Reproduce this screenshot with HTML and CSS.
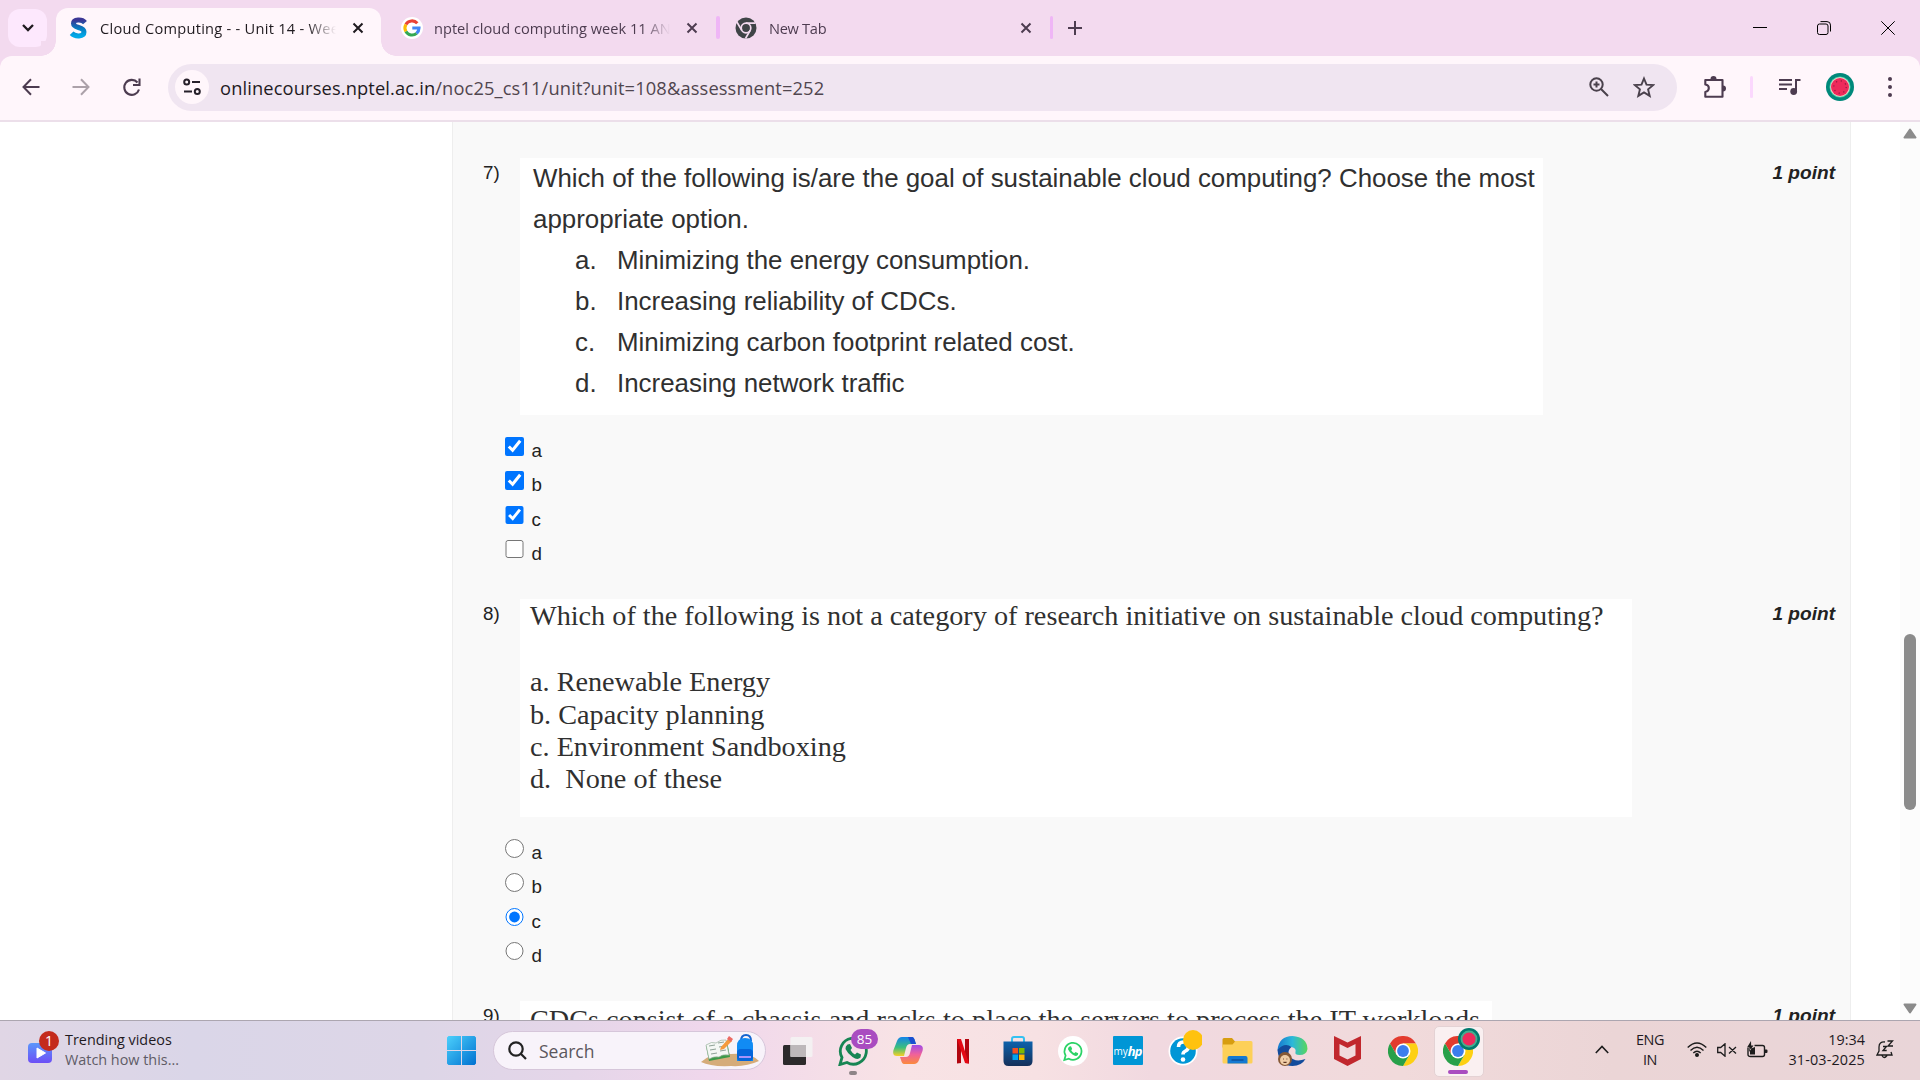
FILE: index.html
```html
<!DOCTYPE html>
<html lang="en">
<head>
<meta charset="utf-8">
<title>Cloud Computing - - Unit 14 - Week 11</title>
<link rel="stylesheet" href="styles.css">
</head>
<body>
<header class="tabstrip">
  <div class="tab-search"><svg width="12" height="8" viewBox="0 0 12 8"><path d="M1 1l5 5 5-5" fill="none" stroke="#1f1a1f" stroke-width="2.3"/></svg></div>
  <div class="tab tab-active">
    <svg class="fav" width="22" height="22" viewBox="0 0 22 22"><defs><linearGradient id="s" x1="0" y1="0" x2="0" y2="1"><stop offset="0" stop-color="#3b3695"/><stop offset=".5" stop-color="#0878bd"/><stop offset="1" stop-color="#02a9e8"/></linearGradient></defs><path d="M17 5.600C14 2 5.500 2.200 5.500 6.500C5.500 11.500 16 9.500 16 15C16 20 7 20 3.600 16.300" fill="none" stroke="url(#s)" stroke-width="5"/></svg>
    <span class="tab-title t1">Cloud Computing - - Unit 14 - Week</span>
    <svg class="x" width="12" height="12" viewBox="0 0 12 12"><path d="M1.500 1.500l9 9M10.500 1.500l-9 9" stroke="#1f1a1f" stroke-width="2"/></svg>
  </div>
  <div class="tab tab-google">
    <svg class="fav" width="22" height="22" viewBox="0 0 22 22"><circle cx="11" cy="11" r="11" fill="#fff"/><g fill="none" stroke-width="3.100"><path d="M16.300 6.300A7 7 0 0 0 4.900 7.500" stroke="#ea4335"/><path d="M4.900 7.500A7 7 0 0 0 4.900 14.500" stroke="#fbbc05"/><path d="M4.900 14.500A7 7 0 0 0 15.600 16.300" stroke="#34a853"/><path d="M15.600 16.300A7 7 0 0 0 18 11H11.300" stroke="#4285f4"/></g></svg>
    <span class="tab-title t2">nptel cloud computing week 11 ANS</span>
    <svg class="x" width="12" height="12" viewBox="0 0 12 12"><path d="M1.500 1.500l9 9M10.500 1.500l-9 9" stroke="#4d3c50" stroke-width="2"/></svg>
  </div>
  <i class="tab-sep"></i>
  <div class="tab tab-new">
    <svg class="fav" width="22" height="22" viewBox="0 0 22 22"><circle cx="11" cy="11" r="10.500" fill="#3f4447"/><circle cx="11" cy="11" r="4.800" fill="none" stroke="#f3daef" stroke-width="1.700"/><path d="M11 6.200h9.500M6.800 13.400L2 5.200M15.200 13.400L10.500 21.500" stroke="#f3daef" stroke-width="1.700"/></svg>
    <span class="tab-title t3">New Tab</span>
    <svg class="x" width="12" height="12" viewBox="0 0 12 12"><path d="M1.500 1.500l9 9M10.500 1.500l-9 9" stroke="#4d3c50" stroke-width="2"/></svg>
  </div>
  <i class="tab-sep thin"></i>
  <svg class="plus" width="14" height="14" viewBox="0 0 14 14"><path d="M7 0v14M0 7h14" stroke="#4d3c50" stroke-width="2"/></svg>
  <div class="win">
    <svg width="14" height="14" viewBox="0 0 14 14"><path d="M0 6.500h14" stroke="#000"/></svg>
    <svg width="14" height="14" viewBox="0 0 14 14" fill="none" stroke="#000"><rect x=".5" y="3" width="10.500" height="10.500" rx="2"/><path d="M3.500.6H10a3.500 3.500 0 0 1 3.500 3.500V10.500"/></svg>
    <svg width="14" height="14" viewBox="0 0 14 14"><path d="M.3.3l13.400 13.400M13.700.3L.3 13.700" stroke="#000"/></svg>
  </div>
</header>
<div class="toolbar">
  <svg class="back" width="18" height="18" viewBox="0 0 18 18"><path d="M17.500 9H2M9 1.300L1.500 9L9 16.700" fill="none" stroke="#4d3c50" stroke-width="2"/></svg>
  <svg class="fwd" width="18" height="18" viewBox="0 0 18 18"><path d="M.5 9H16M9 1.300L16.500 9L9 16.700" fill="none" stroke="#aca1a9" stroke-width="2"/></svg>
  <svg class="reload" width="19" height="19" viewBox="0 0 19 19"><path d="M17 11.500A7.500 7.500 0 1 1 15.500 4.500M17.500 .5V7H11" fill="none" stroke="#4d3c50" stroke-width="2.100"/></svg>
  <div class="omnibox">
    <div class="site"><svg width="18" height="18" viewBox="0 0 18 18" fill="none" stroke="#26202a" stroke-width="2"><circle cx="3.700" cy="4" r="2.500"/><path d="M9 4h8M1 13.500h8"/><circle cx="14.300" cy="13.500" r="2.500"/></svg></div>
    <span class="url"><b>onlinecourses.nptel.ac.in</b>/noc25_cs11/unit?unit=108&amp;assessment=252</span>
    <svg class="zoom" width="20" height="20" viewBox="0 0 20 20" fill="none" stroke="#4a414c" stroke-width="2"><circle cx="7.500" cy="7.500" r="6.200"/><path d="M12 12l7 7M7.500 4.500v6M4.500 7.500h6"/></svg>
    <svg class="star" width="22" height="22" viewBox="0 0 22 22"><path d="M11 2.500l2.500 6.100 6.600.5-5 4.300 1.600 6.500L11 16.400l-5.700 3.500 1.600-6.500-5-4.300 6.600-.5z" fill="none" stroke="#4a414c" stroke-width="1.900"/></svg>
  </div>
  <svg class="ext" width="24" height="24" viewBox="0 0 24 24"><path d="M2.300 5H19.500V21.700H2.300V17C7 16 7 10 2.300 9.500z" fill="none" stroke="#4d3c50" stroke-width="2.100" stroke-linejoin="round"/><path d="M7.500 4a3 3 0 0 1 6 0zM20 10.500a3 3 0 0 1 0 6z" fill="#4d3c50"/></svg>
  <i class="tool-sep"></i>
  <svg class="music" width="22" height="18" viewBox="0 0 22 18"><path d="M0 2h13M0 6.500h13M0 11h8M17 14V2h4.500" fill="none" stroke="#4d3c50" stroke-width="2"/><circle cx="14.700" cy="13.500" r="3.400" fill="#4d3c50"/></svg>
  <svg class="avatar" width="28" height="28" viewBox="0 0 28 28"><circle cx="14" cy="14" r="14" fill="#00897b"/><circle cx="14" cy="14" r="10.500" fill="#4fd0a5"/><circle cx="14" cy="14" r="9.700" fill="#f9d6d0"/><circle cx="14" cy="14" r="9" fill="#ee2b5b"/><circle cx="14" cy="14" r="6.200" fill="none" stroke="#8f1c40" stroke-width="1.200" stroke-dasharray="1.200 3.670"/></svg>
  <svg class="dots" width="4" height="20" viewBox="0 0 4 20" fill="#4d3c50"><circle cx="2" cy="2" r="2"/><circle cx="2" cy="10" r="2"/><circle cx="2" cy="18" r="2"/></svg>
</div>
<main class="page">
  <section class="paper">
    <article class="question">
      <div class="head"><span class="num">7)</span>
        <div class="sheet arial">
          <p>Which of the following is/are the goal of sustainable cloud computing? Choose the most</p>
          <p>appropriate option.</p>
          <p class="li"><span class="k">a.</span><span>Minimizing the energy consumption.</span></p>
          <p class="li"><span class="k">b.</span><span>Increasing reliability of CDCs.</span></p>
          <p class="li"><span class="k">c.</span><span>Minimizing carbon footprint related cost.</span></p>
          <p class="li"><span class="k">d.</span><span>Increasing network traffic</span></p>
        </div>
        <span class="points">1 point</span></div>
      <div class="options">
        <label><input type="checkbox" checked><span>a</span></label>
        <label><input type="checkbox" checked><span>b</span></label>
        <label><input type="checkbox" checked><span>c</span></label>
        <label><input type="checkbox"><span>d</span></label>
      </div>
    </article>
    <article class="question">
      <div class="head"><span class="num">8)</span>
        <div class="sheet times">
          <p class="ask">Which of the following is not a category of research initiative on sustainable cloud computing?</p>
          <p>a. Renewable Energy</p>
          <p>b. Capacity planning</p>
          <p>c. Environment Sandboxing</p>
          <p>d.&nbsp; None of these</p>
        </div>
        <span class="points">1 point</span></div>
      <div class="options">
        <label><input type="radio" name="q8"><span>a</span></label>
        <label><input type="radio" name="q8"><span>b</span></label>
        <label><input type="radio" name="q8" checked><span>c</span></label>
        <label><input type="radio" name="q8"><span>d</span></label>
      </div>
    </article>
    <article class="question">
      <div class="head"><span class="num">9)</span>
        <div class="sheet times nine">
          <p>CDCs consist of a chassis and racks to place the servers to process the IT workloads</p>
        </div>
        <span class="points">1 point</span></div>
    </article>
  </section>
  <aside class="scroll">
    <svg width="14" height="11" viewBox="0 0 14 11"><path d="M7 1.500L12.500 9.500H1.500z" fill="#8b8b8b" stroke="#8b8b8b" stroke-width="2" stroke-linejoin="round"/></svg>
    <i class="thumb"></i>
    <svg width="14" height="11" viewBox="0 0 14 11"><path d="M7 9.500L12.500 1.500H1.500z" fill="#8b8b8b" stroke="#8b8b8b" stroke-width="2" stroke-linejoin="round"/></svg>
  </aside>
</main>
<footer class="taskbar">
  <svg class="widget" width="34" height="36" viewBox="0 0 34 36"><defs><linearGradient id="v" x1="0" y1="0" x2="0" y2="1"><stop offset="0" stop-color="#5b97fb"/><stop offset="1" stop-color="#6d4ff6"/></linearGradient></defs><rect x="1" y="12" width="24" height="20" rx="4" fill="url(#v)"/><path d="M10 17v10l8.500-5z" fill="#fff" stroke="#fff" stroke-width="1" stroke-linejoin="round"/><circle cx="22" cy="10" r="10" fill="#c42b1c"/><text x="22" y="15" text-anchor="middle" fill="#fff" font-family="Open Sans" font-size="14">1</text></svg>
  <div class="news"><span class="n1">Trending videos</span><span class="n2">Watch how this...</span></div>
  <svg class="start" width="29" height="29" viewBox="0 0 29 29"><defs><linearGradient id="w" x1="0" y1="0" x2="1" y2="1"><stop offset="0" stop-color="#4cd0fc"/><stop offset="1" stop-color="#0071d0"/></linearGradient></defs><path d="M1.500 0H14v14H0V1.500zM15 0h12.500L29 1.500V14H15zM0 15h14v14H1.500L0 27.500zM15 15h14v12.500L27.500 29H15z" fill="url(#w)"/></svg>
  <div class="search">
    <svg width="19" height="19" viewBox="0 0 19 19" fill="none" stroke="#222" stroke-width="2.200"><circle cx="8" cy="8" r="6.700"/><path d="M12.800 12.800l5.200 5.200"/></svg>
    <span>Search</span>
    <svg class="art" width="58" height="33" viewBox="0 0 58 33"><path d="M0 28Q10 18 30 20Q50 18 58 27Q45 33 30 32Q10 33 0 28z" fill="#d5ac7a"/><path d="M5 12L26 7L29 23L8 27z" fill="#3c9a48"/><path d="M5 11Q11 7 15 9Q20 5 25 6L28 21Q21 20 18 23Q13 22 8 25z" fill="#f4f7f4" stroke="#9bb29f" stroke-width=".7"/><path d="M8 12l6-1M9 16l6-1M10 20l6-1M17 9l6-1M18 13l6-1M19 17l6-1" stroke="#8fa197" stroke-width="1"/><path d="M20 13L28 4L31 7L23 15L19 16z" fill="#f59b3c"/><path d="M26 5l2-3 4 3-2 3z" fill="#ec6a63"/><path d="M40 7q0-6 5-6t5 6" fill="none" stroke="#1464cf" stroke-width="2"/><path d="M36 27V12q0-8 8-8t8 8v15z" fill="#118bf4"/><rect x="36" y="15" width="16" height="12" rx="4" fill="#0565da"/><path d="M38 23h12" stroke="#a792fa" stroke-width="2"/></svg>
  </div>
  <nav class="apps">
    <div class="app"><svg width="30" height="28" viewBox="0 0 30 28"><rect x="0" y="8" width="23" height="20" rx="1.500" fill="#2c2a2b"/><rect x="7.500" y="0" width="22" height="20" rx="1.500" fill="#f4f1f2"/><path d="M7.500 8H23v12H7.500z" fill="#bdb8ba"/></svg></div>
    <div class="app"><svg width="30" height="30" viewBox="0 0 30 30"><path d="M2 28.500l2-7A13 13 0 1 1 9 26.500z" fill="none" stroke="#178553" stroke-width="2.800"/><path d="M9.500 8.500l2.500-.5 2 4-1.500 2q1.500 3 4.500 4.500l2-2 4 2-.5 3q-3 3-8-.5t-7-8q-.3-3 2-4.500z" fill="#178553"/></svg><span class="badge">85</span><i class="run"></i></div>
    <div class="app"><svg width="30" height="29" viewBox="0 0 30 29"><defs><linearGradient id="c1" x1="0" y1="0" x2="0" y2="1"><stop offset="0" stop-color="#1484ea"/><stop offset=".55" stop-color="#3bbf7d"/><stop offset="1" stop-color="#f7cf25"/></linearGradient><linearGradient id="c2" x1="0" y1="0" x2="0" y2="1"><stop offset="0" stop-color="#a04be8"/><stop offset=".5" stop-color="#f0629a"/><stop offset="1" stop-color="#fb8b3c"/></linearGradient></defs><path d="M9 1H19q2 0 3 4l1 3H17q-3 0-4 4l-2 8H4Q-1 20 .5 14L4 5Q5.500 1 9 1z" fill="url(#c1)"/><path d="M15 1h4q2 0 3 4l1 3h-5z" fill="#1a4fd0"/><path d="M21 28H11q-2 0-3-4l-1-3H13q3 0 4-4l2-8h7q5 0 3.500 6L26 24Q24.500 28 21 28z" fill="url(#c2)"/></svg></div>
    <div class="app"><svg width="14" height="26" viewBox="0 0 14 26"><path d="M1 1h4v24l-4 .6zM9 1h4v24.600L9 25z" fill="#b1060f"/><path d="M1 1h4l8 24.600L9 25z" fill="#e50914"/></svg></div>
    <div class="app"><svg width="30" height="30" viewBox="0 0 30 30"><defs><linearGradient id="st" x1="0" y1="0" x2="0" y2="1"><stop offset="0" stop-color="#0d62ac"/><stop offset="1" stop-color="#15305a"/></linearGradient></defs><path d="M9 6V3q0-2 2-2h8q2 0 2 2v3" fill="none" stroke="#35c1f1" stroke-width="2"/><path d="M.5 5.500h29V25q0 5-5 5h-19q-5 0-5-5z" fill="url(#st)"/><path d="M9.500 12H15v5.500H9.500z" fill="#f25022"/><path d="M16 12h5.500v5.500H16z" fill="#7fba00"/><path d="M9.500 18.500H15V24H9.500z" fill="#00a4ef"/><path d="M16 18.500h5.500V24H16z" fill="#ffb900"/></svg></div>
    <div class="app"><svg width="30" height="30" viewBox="0 0 30 30"><circle cx="15" cy="15" r="15" fill="#fff"/><path d="M6.300 24l1.300-4.500A8.500 8.500 0 1 1 10.800 22.700z" fill="none" stroke="#2bd366" stroke-width="1.700"/><path d="M11.500 10.500l1.500-.3 1.200 2.700-1 1.300q1 2 3 3l1.300-1.300 2.700 1.300-.4 1.800q-2 2-5.300-.4t-4.500-5.300q-.2-1.800 1.500-2.800z" fill="#2bd366"/></svg></div>
    <div class="app"><div class="hp"><i>my</i><b>hp</b></div></div>
    <div class="app"><svg class="help" width="34" height="36" viewBox="0 0 34 36"><circle cx="15" cy="21" r="14.500" fill="#fff"/><circle cx="15" cy="21" r="12.800" fill="#0096d6"/><path d="M10.500 17q0-5 5-5t5 4.500q0 3-3 4.500-2.500 1.200-2.500 3.500" fill="none" stroke="#fff" stroke-width="3.600"/><circle cx="15" cy="29.500" r="2.300" fill="#fff"/><circle cx="25" cy="10" r="10" fill="#ffc20e"/></svg></div>
    <div class="app"><svg width="31" height="27" viewBox="0 0 31 27"><path d="M.5 2.500q0-1.500 1.500-1.500h8l3 3.500H28v6H.5z" fill="#d79d10"/><path d="M.5 7.500h10l3-3.500H29q1.500 0 1.500 1.500V25q0 1.500-1.500 1.500H2Q.5 26.500.5 25z" fill="#fdd058"/><path d="M5.500 26.500V21q0-2 2-2h16q2 0 2 2v5.500z" fill="#1479d2"/><path d="M9.500 23h12" stroke="#0b4a91" stroke-width="1.300"/></svg></div>
    <div class="app"><svg width="31" height="30" viewBox="0 0 31 30"><defs><linearGradient id="e" x1="0" y1="0" x2="1" y2="0"><stop offset="0" stop-color="#1679cf"/><stop offset=".5" stop-color="#2cb8d9"/><stop offset="1" stop-color="#58d65c"/></linearGradient></defs><path d="M.5 14Q2 0 15.500 0Q30 1 30.500 13q-1 6-8 6-5 0-4-3 1-4-4-5-6-1-11 5z" fill="url(#e)"/><path d="M.5 14q7-8 14-3-5 4-2 9 5 7 16 3-4 7-13 7Q2 30 .5 14z" fill="#134c9c"/><circle cx="8" cy="23" r="7" fill="#865936"/><circle cx="8" cy="24" r="5" fill="#f0cda6"/><path d="M6 23h.8M9.500 23h.8M6.500 26q1.500 1 3 0" stroke="#5a3320" stroke-width="1.200"/></svg></div>
    <div class="app"><svg width="27" height="30" viewBox="0 0 27 30"><path d="M0 0l13.500 6.500L27 0v23l-13.500 7L0 23zM5.500 8v11.500l8 4 8-4V8l-8 4z" fill="#c1272d" fill-rule="evenodd"/></svg></div>
    <div class="app"><svg width="30" height="30" viewBox="-15 -15 30 30"><g id="chrome"><path d="M-13-7.500A15 15 0 0 1 13-7.500H0L-6.500 3.750z" fill="#e33b2e"/><path d="M13-7.500A15 15 0 0 1 0 15L6.500 3.750 0-7.500z" fill="#fdd013"/><path d="M0 15A15 15 0 0 1-13-7.500L-6.500 3.750H6.500z" fill="#28a049"/><circle r="7.500" fill="#fff"/><circle r="5.900" fill="#3b7ded"/></g></svg></div>
    <div class="app current"><svg width="30" height="30" viewBox="-15 -15 30 30"><use href="#chrome"/></svg><svg class="melon" width="22" height="24" viewBox="0 0 28 28"><circle cx="14" cy="14" r="14" fill="#00796d"/><circle cx="14" cy="14" r="10.700" fill="#45ad8e"/><circle cx="14" cy="14" r="8.300" fill="#ee2b5b"/></svg><i class="run on"></i></div>
  </nav>
  <div class="tray">
    <svg class="chev" width="14" height="9" viewBox="0 0 14 9"><path d="M.8 8L7 1.500 13.200 8" fill="none" stroke="#1c1c1c" stroke-width="1.600"/></svg>
    <div class="lang"><span>ENG</span><span>IN</span></div>
    <svg class="wifi" width="20" height="15" viewBox="0 0 20 15" fill="none" stroke="#1c1c1c" stroke-width="1.400"><path d="M.7 5.500Q10-3.500 19.300 5.500M3.500 8.500Q10 2 16.500 8.500M6.300 11Q10 7.500 13.700 11"/><circle cx="10" cy="13" r="1.300" fill="#1c1c1c"/></svg>
    <svg class="vol" width="20" height="14" viewBox="0 0 20 14" fill="none" stroke="#1c1c1c" stroke-width="1.300"><path d="M.7 4.500h3L8 .8v12.400L3.700 9.500h-3zM12 4l7 6.500M19 4l-7 6.500"/></svg>
    <svg class="bat" width="21" height="17" viewBox="0 0 21 17"><path d="M7.500 4.500h8q2 0 2 2v7q0 2-2 2h-12q-2.500 0-2.500-2V7" fill="none" stroke="#1c1c1c" stroke-width="1.400"/><path d="M18 8.500h1.500q1 0 1 1v1.500q0 1-1 1H18zM3 8l5-2v7.500H3zM4 0L0 6.500h2.500L2 11l4.500-6.500H4.200z" fill="#1c1c1c"/></svg>
    <div class="clock"><span>19:34</span><span class="date">31-03-2025</span></div>
    <svg class="bell" width="18" height="19" viewBox="0 0 18 19" fill="none" stroke="#1c1c1c" stroke-width="1.300"><path d="M9 2Q3 1.500 3 7v4L1 15h15l-1-3M6 15.500q2 4 5 0M11.500 1h5l-4.500 5h5M7 6.500h3.500L7 10.500h3.700"/></svg>
  </div>
</footer>
</body>
</html>
```
FILE: styles.css
```css
* { box-sizing: border-box; }
body { margin: 0; width: 1920px; height: 1080px; overflow: hidden; display: flex; flex-direction: column; background: #f3daef; font-family: "Open Sans", "Noto Sans", sans-serif; color: #1f1a1f; }
svg { display: block; flex: none; }

.tabstrip { flex: none; height: 56px; display: flex; padding-left: 8px; font-size: 14.6px; color: #4d3c50; }
.tab-search { width: 39px; height: 38px; margin: 9px 9px 0 0; border-radius: 12px; background: #fde8fd; display: flex; align-items: center; justify-content: center; }
.tab { display: flex; align-items: center; height: 40px; margin-top: 8px; position: relative; }
.tab-active { width: 325px; height: 48px; padding: 0 0 8px 12px; border-radius: 12px 12px 0 0; background: #fff6fb; color: #1f1a1f; }
.tab-active::before, .tab-active::after { content: ""; position: absolute; bottom: 0; width: 15px; height: 15px; }
.tab-active::before { left: -15px; background: radial-gradient(circle at 0 0, #f3daef 14.5px, #fff6fb 15px); }
.tab-active::after { right: -15px; background: radial-gradient(circle at 100% 0, #f3daef 14.5px, #fff6fb 15px); }
.tab-title { flex: none; overflow: hidden; white-space: nowrap; width: 236px; margin-right: 15px; -webkit-mask-image: linear-gradient(90deg, #000 88%, transparent); mask-image: linear-gradient(90deg, #000 88%, transparent); }
.t1 { margin-left: 10px; margin-right: 16px; letter-spacing: .27px; }
.t2 { margin-left: 11px; margin-right: 16px; letter-spacing: .01px; }
.t3 { margin-left: 12px; width: 235px; letter-spacing: -.3px; margin-right: 16px; }
.tab-google { width: 335px; padding-left: 20px; }
.tab-sep { width: 4px; height: 23px; margin-top: 16px; border-radius: 2px; background: #efb6f6; }
.tab-sep.thin { width: 3px; }
.tab-new { width: 330px; padding-left: 15px; }
.plus { margin: 21px 0 0 15px; }
.win { margin: 21px 25px 0 auto; display: flex; gap: 50px; }

.toolbar { flex: none; height: 66px; padding: 0 28px 2px 22px; display: flex; align-items: center; background: #fff6fb; border-bottom: 2px solid #ecdfea; border-radius: 12px 12px 0 0; }
.fwd { margin-left: 32px; }
.reload { margin-left: 32px; }
.omnibox { margin-left: 27px; width: 1509px; height: 47px; border-radius: 24px; background: #f0e5f1; display: flex; align-items: center; padding: 0 22px 0 7px; }
.site { width: 34px; height: 34px; border-radius: 50%; background: #fff6fb; display: flex; align-items: center; justify-content: center; }
.url { margin-left: 11px; font-size: 18.3px; letter-spacing: .13px; color: #50464f; white-space: nowrap; }
.url b { font-weight: 400; color: #1f1a1f; }
.zoom { margin-left: auto; }
.star { margin-left: 24px; }
.ext { margin-left: 26px; }
.tool-sep { width: 3px; height: 22px; margin-left: 23px; border-radius: 2px; background: #fbd8fd; }
.music { margin-left: 26px; }
.avatar { margin-left: 25px; }
.dots { margin-left: auto; }

.page { flex: none; height: 898px; display: flex; background: #fff; overflow: hidden; }
.paper { width: 1399px; margin-left: 452px; padding: 36px 15px 0 30px; background: #f9f9f9; border: solid #eee; border-width: 0 1px; font-family: "Liberation Sans", Arial, sans-serif; font-size: 18.75px; color: #222; }
.head { display: flex; align-items: flex-start; }
.num { width: 37px; line-height: 22px; padding-top: 4px; }
.sheet { background: #fff; white-space: nowrap; color: #303030; }
.sheet p { margin: 0; }
.arial { width: 1023px; height: 257px; padding: 0 0 0 13px; font-size: 25.9px; line-height: 41px; }
.arial .li { padding-left: 42px; display: flex; }
.k { width: 42px; }
.times { width: 1112px; height: 218px; padding: 1px 0 0 10px; font-family: "Liberation Serif", "Times New Roman", serif; font-size: 28.22px; line-height: 32.3px; }
.times .ask { margin-bottom: 34px; }
.nine { width: 972px; padding-top: 3px; }
.points { margin-left: auto; line-height: 22px; padding-top: 4px; font-size: 19.1px; font-weight: 700; font-style: italic; }
.options { padding: 18px 0 29px 22px; }
.options label { display: flex; height: 34.25px; align-items: flex-start; }
.options input { width: 18.5px; height: 18.5px; margin: 4px 8px 0 0; accent-color: #0075ff; }
.options span { line-height: 22px; padding-top: 7px; }
.scroll { width: 20px; margin-left: 49px; padding: 6px 0; background: #fcfcfc; display: flex; flex-direction: column; align-items: center; justify-content: space-between; }
.thumb { width: 12px; height: 176px; margin-top: 325px; margin-bottom: auto; border-radius: 6px; background: #8b8b8b; }
.scroll svg:first-child { margin-bottom: 170px; }

.taskbar { flex: none; height: 60px; display: flex; align-items: center; border-top: 1px solid #aca6b0; background: linear-gradient(90deg, #e0d6e5 0, #dad6e8 10%, #ddd6e7 22%, #e5d6e9 30%, #f0d7ec 37%, #f8e3e5 47%, #f7e1e3 54%, #f1d9e0 60%, #f1dadb 73%, #ebd5d6 84%, #e9d5d8 100%); font-size: 14.4px; }
.widget { margin: -3px 0 0 27px; }
.news { width: 150px; margin-left: 4px; padding-bottom: 2px; display: flex; flex-direction: column; line-height: 20px; }
.news span, .lang span, .clock span { white-space: nowrap; }
.n2 { color: #605c66; }
.start { margin-left: 232px; }
.search { width: 273px; height: 39px; margin-left: 17px; margin-right: 1px; padding: 0 6px 0 14px; border: 1px solid #d6c6da; border-radius: 20px; background: #f8f3fa; display: flex; align-items: center; font-size: 17.5px; color: #5b575d; }
.search span { margin-left: 12px; }
.art { margin-left: auto; }
.apps { display: flex; margin-left: 3px; }
.app { width: 55px; height: 59px; display: flex; align-items: center; justify-content: center; position: relative; }
.badge { position: absolute; left: 26px; top: 8px; width: 27px; height: 20px; border-radius: 10px; background: #a94cc0; color: #fff; font-size: 13.5px; line-height: 20px; text-align: center; }
.run { position: absolute; left: 24px; bottom: 5px; width: 8px; height: 4px; border-radius: 2px; background: #8d8487; }
.run.on { left: 18px; width: 20px; background: #a94cc0; bottom: 6px; }
.help { margin: -6px 0 0 4px; }
.hp { width: 30px; height: 29px; background: #0096d6; border-radius: 1px; color: #fff; display: flex; align-items: center; justify-content: center; font-size: 10px; }
.hp i { font-style: normal; }
.hp b { font-size: 13px; font-style: italic; letter-spacing: -1px; }
.current::before { content: ""; position: absolute; left: 4px; top: 5px; width: 48px; height: 49px; border-radius: 5px; background: #faf0f1; border: 1px solid #e4d2d4; }
.current svg { position: relative; }
.current .melon { position: absolute; left: 28px; top: 6px; }
.tray { margin-left: auto; padding-right: 26px; padding-bottom: 2px; display: flex; align-items: center; }
.lang, .clock { display: flex; flex-direction: column; line-height: 20px; }
.lang { width: 40px; margin: 0 17px 0 21px; align-items: center; }
.lang span { letter-spacing: -.4px; }
.vol { margin-left: 10px; }
.bat { margin-left: 10px; }
.clock { width: 97px; margin-right: 11px; align-items: flex-end; }
.date { letter-spacing: .15px; }
```
